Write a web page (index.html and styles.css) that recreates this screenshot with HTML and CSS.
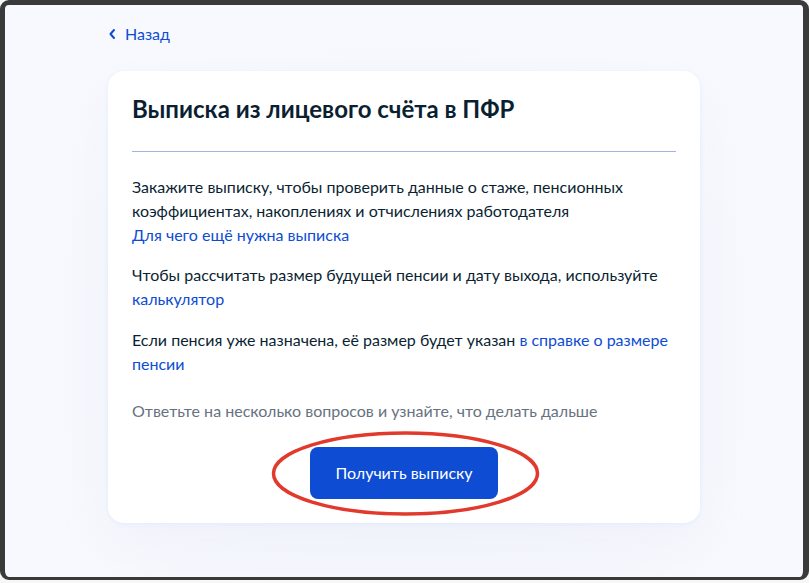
FILE: index.html
```html
<!DOCTYPE html>
<html lang="ru">
<head>
  <meta charset="UTF-8" />
  <meta name="viewport" content="width=device-width, initial-scale=1.0" />
  <title>Выписка из лицевого счёта в ПФР</title>
  <link rel="stylesheet" href="styles.css">
</head>
<body>
  <div class="screen">
    <div class="page">
      <!-- back link -->
      <a class="back" href="#">
        <svg class="back-icon" width="8" height="12" viewBox="0 0 8 12" aria-hidden="true">
          <path d="M6 2 L2.5 6 L6 10" fill="none" stroke="currentColor" stroke-width="2" stroke-linecap="round" stroke-linejoin="round" />
        </svg>
        Назад
      </a>

      <!-- main card -->
      <div class="card">
        <h1>Выписка из лицевого счёта в ПФР</h1>
        <hr class="divider" />

        <p>
          Закажите выписку, чтобы проверить данные о стаже, пенсионных
          коэффициентах, накоплениях и отчислениях работодателя<br />
          <a href="#">Для чего ещё нужна выписка</a>
        </p>
        <p class="calc">
          Чтобы рассчитать размер будущей пенсии и дату выхода, используйте
          <a href="#">калькулятор</a>
        </p>
        <p class="last">
          Если пенсия уже назначена, её размер будет указан
          <a href="#">в справке о размере пенсии</a>
        </p>
        <p class="hint">Ответьте на несколько вопросов и узнайте, что делать дальше</p>

        <div class="actions">
          <div class="btn-wrap">
            <button type="button" class="btn">Получить выписку</button>
            <!-- red annotation around the button -->
            <svg class="mark" width="271" height="89" viewBox="0 0 271 89" aria-hidden="true">
              <ellipse cx="135.5" cy="44.5" rx="132" ry="40.5" fill="none" stroke="#e2392d" stroke-width="3.5" />
            </svg>
          </div>
        </div>
      </div>
    </div>
  </div>
</body>
</html>
```

FILE: styles.css
```css
:root {
  --blue: #0d4cd3;
  --text: #0b1f33;
  --muted: #66727f;
  --frame: #3a3a3a;
}
* {
  box-sizing: border-box;
}
html,
body {
  margin: 0;
  background: #f7f7f7;
}
body {
  font-family: Lato, "Noto Sans", sans-serif;
  color: var(--text);
  font-size: 16px;
  line-height: 24px;
}
a {
  color: var(--blue);
  text-decoration: none;
}
/* ---------- FRAME ---------- */
.screen {
  width: 809px;
  height: 580px;
  border: solid var(--frame);
  border-width: 5px 6px 3px 5px;
  border-radius: 9px;
  background: radial-gradient(ellipse at 50% 60%, #f1f4fc 0%, #f8f9fe 70%);
  overflow: hidden;
}
.page {
  width: 592px;
  margin: 0 auto;
  padding-top: 17px;
}
/* ---------- BACK ---------- */
.back {
  display: inline-flex;
  align-items: center;
  gap: 9px;
  margin-bottom: 25px;
}
.back-icon {
  display: block;
}
/* ---------- CARD ---------- */
.card {
  background: #fff;
  border-radius: 16px;
  padding: 24px;
  box-shadow: 0 1px 4px #e3ebfc, 0 24px 48px rgba(230, 235, 245, 0.4);
}
h1 {
  margin: 0;
  font-size: 24px;
  line-height: 28px;
  font-weight: 700;
}
.divider {
  border: 0;
  height: 1px;
  background: #a4b3e4;
  margin: 28px 0 23px 0;
}
p {
  margin: 0 0 16px 0;
}
p.calc {
  margin-bottom: 17px;
}
p.last {
  margin-bottom: 0;
}
.hint {
  color: var(--muted);
  margin-top: 23px;
  margin-bottom: 24px;
}
/* ---------- BUTTON ---------- */
.actions {
  display: flex;
  justify-content: center;
}
.btn-wrap {
  position: relative;
}
.btn {
  display: block;
  background: var(--blue);
  color: #fff;
  border: 0;
  border-radius: 8px;
  font-family: inherit;
  font-size: 16px;
  line-height: 24px;
  padding: 14px 25px;
  cursor: pointer;
}
.mark {
  position: absolute;
  left: -40px;
  top: -18px;
  pointer-events: none;
}
```
